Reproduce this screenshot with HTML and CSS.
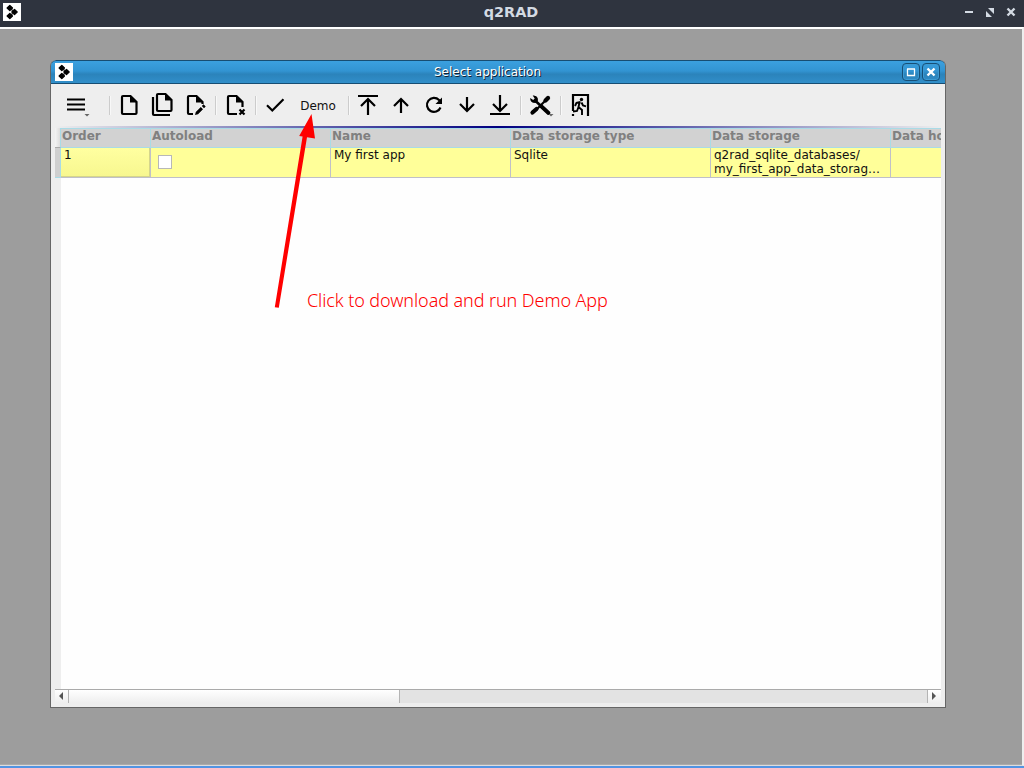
FILE: index.html
```
<!DOCTYPE html>
<html lang="en">
<head>
<meta charset="utf-8">
<title>q2RAD</title>
<link rel="stylesheet" href="styles.css">
</head>
<body>
<div class="screen">
  <header class="appbar">
    <svg class="logo" viewBox="0 0 18 18"><path class="link" d="M7 5l4 4-4 4"/><path class="nodes" d="M6.800 2.300L9.500 5 6.800 7.700 4.100 5zM11.500 6.300L14.200 9l-2.700 2.700L8.800 9zM6.800 10.300l2.700 2.700-2.700 2.700L4.100 13z"/></svg>
    <h1 class="appbar-title">q2RAD</h1>
    <svg class="appbar-controls" viewBox="0 0 56 16"><path d="M1 7h8v2H1zM24 4h6v6zM22 7v6h6z"/><path class="cross" d="M43.500 4.500l7 7m0-7l-7 7"/></svg>
  </header>
  <main class="workspace">
    <section class="window">
      <div class="titlebar">
        <svg class="logo" viewBox="0 0 18 18"><path class="link" d="M7 5l4 4-4 4"/><path class="nodes" d="M6.800 2.300L9.500 5 6.800 7.700 4.100 5zM11.500 6.300L14.200 9l-2.700 2.700L8.800 9zM6.800 10.300l2.700 2.700-2.700 2.700L4.100 13z"/></svg>
        <h2 class="window-title">Select application</h2>
        <div class="window-controls">
          <svg class="control" viewBox="0 0 16 16"><path class="frame" d="M4 5h8M4.500 5v6.500h7V5"/></svg>
          <svg class="control" viewBox="0 0 16 16"><path class="close" d="M4.500 4.500l7 7m0-7l-7 7"/></svg>
        </div>
      </div>
      <nav class="toolbar">
        <svg class="tool tool-menu" viewBox="0 0 33 33"><path d="M7 10.500h18M7 15.500h18M7 20.500h18"/><path class="drop" d="M24.500 25h5l-2.500 2.500z"/></svg>
        <i class="sep"></i>
        <svg class="tool" viewBox="0 0 33 33"><path d="M18.500 7H11q-1 0-1 1v16q0 1 1 1h12.500q1 0 1-1V13z"/><path class="solid" d="M18 7v6.500h6.500z"/></svg>
        <svg class="tool" viewBox="0 0 33 33"><path d="M20.500 5H13q-1 0-1 1v15q0 1 1 1h12.500q1 0 1-1V11zM8 8v17q0 1 1 1h16"/><path class="solid" d="M20 5v6.500h6.500z"/></svg>
        <svg class="tool tool-edit" viewBox="0 0 33 33"><path d="M14 25H10q-1 0-1-1V8q0-1 1-1h7.500l6 6v2"/><path class="solid" d="M17 7v6.500h6.500z"/><path class="pencil" d="M16 26l.800-3 5-5 2.200 2.200-5 5zM22.800 17l1.700-1.700 2.200 2.200L25 19.200z"/></svg>
        <i class="sep"></i>
        <svg class="tool" viewBox="0 0 33 33"><path d="M18 25H10q-1 0-1-1V8q0-1 1-1h7.500l6 6v5"/><path class="solid" d="M17 7v6.500h6.500z"/><path d="M20.500 20.500l5 5m0-5L20.500 25.500"/></svg>
        <i class="sep"></i>
        <svg class="tool" viewBox="0 0 33 33"><path d="M8 16.300l5.300 5.200L24.500 10.300"/></svg>
        <span class="demo">Demo</span>
        <i class="sep"></i>
        <svg class="tool" viewBox="0 0 33 33"><path d="M7 7h20M17 26V10M10 17l7-7 7 7"/></svg>
        <svg class="tool" viewBox="0 0 33 33"><path d="M17 24V10M10 17l7-7 7 7"/></svg>
        <svg class="tool" viewBox="0 0 33 33"><path d="M23.500 18.500a7 7 0 1 1-1.500-7.500l2 2"/><path class="solid" d="M25 8.500V15h-6.500z"/></svg>
        <svg class="tool" viewBox="0 0 33 33"><path d="M17 8v14M10 15l7 7 7-7"/></svg>
        <svg class="tool" viewBox="0 0 33 33"><path d="M17 6v16M10 15l7 7 7-7M7 25h20"/></svg>
        <i class="sep"></i>
        <svg class="tool" viewBox="0 0 33 33"><path d="M10.500 11l13.500 12.500" stroke-width="2.600"/><path class="wrench" d="M17 17l7.500 7"/><path class="driver" d="M8.500 23.500l4-3.500"/><path d="M12 21L22 11"/><path class="pencil" d="M6.200 9l3 2 1.500-1.500-2-3q4-.5 5 2.500l.3 2.500-2.500 2.500-2.500-.3Q6 12.500 6.200 9z"/><path class="driver" d="M21.500 11.500L24 9"/><path class="drop" d="M24.500 25h5l-2.500 2.500z"/></svg>
        <i class="sep"></i>
        <svg class="tool" viewBox="0 0 33 33"><path d="M10 22V6h15v21M10 25v2"/><circle class="solid" cx="18.500" cy="10.500" r="1.700"/><path class="runner" d="M16.500 13.500L15.500 18l3.500 3v5M15.500 18l-1.500 4-4 .5M17.500 13l-4 .8-1.500 3.200M18.500 13.500l1.500 3 3 .8"/></svg>
      </nav>
      <div class="accent"></div>
      <div class="table">
        <div class="row head">
          <div class="stub"></div><div class="order">Order</div><div class="auto">Autoload</div><div class="name">Name</div><div class="type">Data storage type</div><div class="storage">Data storage</div><div class="host">Data host</div>
        </div>
        <div class="row record">
          <div class="stub"></div><div class="order current">1</div><div class="auto"><span class="checkbox"></span></div><div class="name">My first app</div><div class="type">Sqlite</div><div class="storage">q2rad_sqlite_databases/<br>my_first_app_data_storag…</div><div class="host"></div>
        </div>
        <div class="blank"></div>
      </div>
      <div class="scrollbar">
        <svg class="arrow-left" viewBox="0 0 13 14"><path d="M8 2v8L4 6z"/></svg>
        <div class="thumb"></div>
        <div class="track"></div>
        <svg class="arrow-right" viewBox="0 0 13 14"><path d="M4 2v8l4-4z"/></svg>
      </div>
    </section>
  </main>
  <svg class="pointer" viewBox="0 0 50 200"><path d="M4.800 193.800L.800 193.200 28.600 22.500 25.200 22 37.500 0 41 24.500 33 23.200z"/></svg>
  <p class="note">Click to download and run Demo App</p>
</div>
</body>
</html>
```
FILE: styles.css
```
* { box-sizing: border-box; }
body { margin: 0; font: 12px/14px "DejaVu Sans", sans-serif; color: #111; }
.screen { position: relative; width: 1024px; height: 768px; overflow: hidden; display: flex; flex-direction: column; background: #9d9d9d; }
.screen svg { display: block; flex: none; }
.appbar { height: 27px; flex: none; display: flex; align-items: flex-start; padding: 3px 4px 0 3px; background: #2f343f; }
.logo { width: 18px; height: 18px; background: #fff; }
.logo .link { fill: none; stroke: #555; stroke-width: 1.5; }
.logo .nodes { stroke: #000; stroke-width: 1.2; stroke-linejoin: round; }
.appbar-title { flex: 1; margin: 1px 0 0 37px; font-size: 14.4px; line-height: 17px; text-align: center; color: #d3dae3; }
.appbar-controls { width: 56px; height: 16px; margin-top: 1px; fill: #d3dae3; }
.cross { stroke: #d3dae3; stroke-width: 2.4; }
.workspace { flex: 1; padding: 31px 0 0 50px; border-top: 2px solid #fff; border-right: 2px solid #eee; border-bottom: 1px solid #ddd; background: #9d9d9d; box-shadow: inset 0 -1px #aaa; margin-bottom: 2px; }
.screen::after { content: ""; position: absolute; left: 0; right: 0; bottom: 0; height: 2px; background: #5294e2; }
.window { width: 896px; height: 648px; display: flex; flex-direction: column; border: 1px solid #666; border-top: 0; border-radius: 6px 6px 0 0; overflow: hidden; background: #eee; }
.titlebar { height: 24px; flex: none; display: flex; margin: 0 -1px; padding: 2px 5px 0 4px; border: 1px solid #174d72; border-radius: 6px 6px 0 0; background: linear-gradient(#3ba0df, #3294d2 45%, #2b83bb 60%, #318fca); }
.window-title { flex: 1; margin: 2px 0 0; font-size: 12px; font-weight: 400; text-align: center; color: #fff; text-shadow: 1px 1px #123; }
.window-controls { display: flex; gap: 2px; }
.control { width: 18px; height: 18px; border: 1px solid #174f76; border-radius: 4px; box-shadow: inset 0 0 0 1px #3c9ad3; }
.control path { fill: none; stroke: #fff; }
.control .frame { stroke-width: 1.3; }
.control .close { stroke-width: 2.4; }
.toolbar { height: 42px; flex: none; display: flex; align-items: flex-start; padding: 5px 0 0 9px; background: #eee; }
.tool { width: 33px; height: 33px; fill: none; stroke: #000; stroke-width: 2.2; }
.tool-menu { margin-right: 13px; }
.tool-edit { margin-left: 1px; }
.tool .drop { fill: #666; stroke: none; }
.tool .solid, .tool .pencil { fill: #000; stroke: none; }
.tool .wrench { stroke-width: 3.8; stroke-linecap: round; }
.tool .driver { stroke-width: 4.2; stroke-linecap: round; }
.tool .runner { stroke-width: 1.9; }
.sep { width: 1px; height: 19px; margin: 7px 3px 0; background: #ccc; box-shadow: 1px 0 #f8f8f8; }
.sep:nth-of-type(1), .sep:nth-of-type(6) { margin-right: 2px; }
.sep:nth-of-type(4) { margin-left: 4px; margin-right: 2px; }
.sep:nth-of-type(5) { margin-left: 4px; }
.demo { width: 52px; padding-top: 10px; text-align: center; }
.accent { height: 2px; flex: none; margin: 0 4px; background: linear-gradient(90deg, #eee, #000080 50%, #eee); }
.table { flex: 1; display: flex; flex-direction: column; width: 886px; margin-left: 4px; overflow: hidden; }
.row { display: flex; flex: none; }
.row > div { flex: none; overflow: hidden; white-space: nowrap; }
.stub { width: 6px; }
.order { width: 90px; }
.auto, .name, .storage { width: 180px; }
.type { width: 200px; }
.host { width: 180px; }
.head { height: 20px; font-weight: 700; color: #808080; }
.head > div { padding: 0 0 0 1px; border-top: 1px solid #a9dbe6; border-bottom: 1px solid #a9dbe6; border-right: 1px solid #a9dbe6; background: #d2d2d2; }
.head > .stub { background: linear-gradient(90deg, #f4f4f4, #ddd); border-color: #aaa; border-top: 0; border-right-color: #a9dbe6; }
.record { height: 30px; }
.record > div { padding: 0 0 0 3px; border-right: 1px solid #c0c0c8; border-bottom: 1px solid #c0c0c8; background: #ffff99; }
.record > .stub { background: #d0d0d0; border-right-color: #a9dbe6; border-bottom-color: #a9dbe6; }
.record > .current { background: linear-gradient(#ffffa0, #f7f78f); box-shadow: inset -1px -1px #d5d58b; }
.checkbox { display: block; width: 14px; height: 14px; margin: 7px 0 0 4px; border: 1px solid #b8b8b8; background: #fff; }
.blank { flex: 1; margin-left: 6px; background: #fefefe; }
.scrollbar { display: flex; height: 14px; flex: none; margin: 0 4px 4px; width: 886px; border-top: 1px solid #aaa; background: linear-gradient(#fff, #eee); }
.arrow-left, .arrow-right { width: 13px; height: 14px; fill: #555; }
.thumb { width: 332px; border: solid #b4b4b4; border-width: 0 1px; }
.track { flex: 1; background: #e3e3e3; border-right: 1px solid #b4b4b4; }
.pointer { position: absolute; left: 274px; top: 114px; width: 50px; height: 200px; fill: #f00; }
.note { position: absolute; left: 307px; top: 287px; margin: 0; font: 300 18px/26px "Noto Sans", sans-serif; letter-spacing: -0.09px; white-space: nowrap; color: #f00; }
```
